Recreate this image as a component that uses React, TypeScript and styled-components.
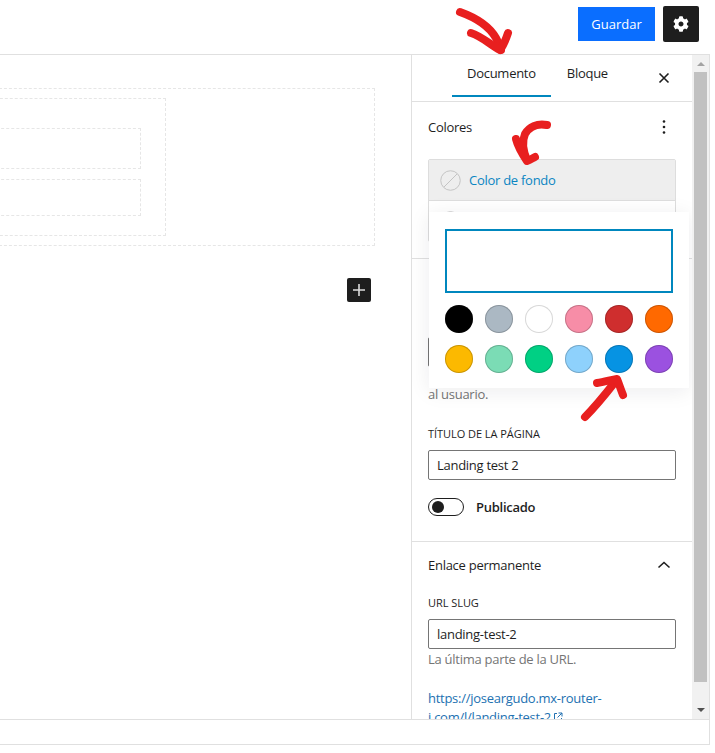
import React from "react";
import styled, { createGlobalStyle } from "styled-components";
import { FaCog } from "react-icons/fa";

const Global = createGlobalStyle`
  html, body { margin: 0; padding: 0; background: #fff; }
  body { font-family: "Open Sans", "Noto Sans", Arial, sans-serif; font-size: 13px; color: #1e1e1e; letter-spacing: -0.27px; }
  * { box-sizing: border-box; }
`;

const Page = styled.div`
  position: relative;
  width: 715px;
  height: 753px;
  overflow: hidden;
  background: #fff;
`;
const Frame = styled.div`
  width: 710px;
  height: 745px;
  display: flex;
  flex-direction: column;
`;
const Header = styled.header`
  height: 55px;
  flex: none;
  border-bottom: 1px solid #e0e0e0;
  display: flex;
  justify-content: flex-end;
  align-items: center;
  gap: 8px;
  padding: 0 11px 6px 0;
`;
const SaveButton = styled.button`
  width: 77px;
  height: 34px;
  border: 0;
  background: #0a6eff;
  color: #fff;
  font: 500 13px "Open Sans", sans-serif;
  padding: 0;
`;
const SettingsButton = styled.button`
  width: 36px;
  height: 36px;
  border: 0;
  border-radius: 2px;
  background: #1e1e1e;
  color: #fff;
  display: flex;
  align-items: center;
  justify-content: center;
  padding: 0;
  font-size: 16px;
`;
const Main = styled.div`
  flex: 1;
  min-height: 0;
  display: flex;
  border-right: 1px solid #e0e0e0;
`;
const Canvas = styled.main`
  width: 411px;
  flex: none;
  overflow: hidden;
  display: flex;
  flex-direction: column;
  padding-top: 33px;
`;
const Dashed = styled.div<{ $w: number; $h: number; $pt?: number; $mb?: number; $ml?: number }>`
  flex: none;
  width: ${(p) => p.$w}px;
  height: ${(p) => p.$h}px;
  margin-left: ${(p) => p.$ml ?? 0}px;
  margin-bottom: ${(p) => p.$mb ?? 0}px;
  padding-top: ${(p) => p.$pt ?? 0}px;
  border: 1px dashed #e6e6e6;
`;
const AddButton = styled.button`
  flex: none;
  width: 24px;
  height: 24px;
  margin: 32px 0 0 347px;
  padding: 0;
  border: 0;
  border-radius: 2px;
  background: #1e1e1e;
  display: flex;
  align-items: center;
  justify-content: center;
`;
const Sidebar = styled.aside`
  width: 281px;
  flex: none;
  border-left: 1px solid #e0e0e0;
  overflow: hidden;
`;
const Tabs = styled.div`
  height: 47px;
  border-bottom: 1px solid #e0e0e0;
  padding-left: 40px;
  display: flex;
  align-items: flex-start;
`;
const Tab = styled.div<{ $active?: boolean }>`
  height: 42px;
  padding: 9px 15px 0;
  line-height: 18px;
  font-size: 13px;
  color: #1e1e1e;
  border-bottom: 2px solid ${(p) => (p.$active ? "#0087be" : "transparent")};
  margin-right: ${(p) => (p.$active ? 1 : 0)}px;
`;
const CloseIcon = styled.svg`
  margin: 17px 22px 0 auto;
  width: 12px;
  height: 12px;
  flex: none;
`;
const Section = styled.section<{ $pb: number; $pt: number; $border?: boolean }>`
  padding: ${(p) => p.$pt}px 16px ${(p) => p.$pb}px;
  border-bottom: ${(p) => (p.$border ? "1px solid #e0e0e0" : "0")};
`;
const SectionHead = styled.div<{ $mb?: number }>`
  display: flex;
  justify-content: space-between;
  align-items: center;
  height: 18px;
  line-height: 18px;
  margin-bottom: ${(p) => p.$mb ?? 0}px;
`;
const HeadIcon = styled.svg`
  width: 16px;
  height: 16px;
  margin-right: 4px;
  flex: none;
`;
const ColorBox = styled.div`
  position: relative;
  border: 1px solid #ddd;
  border-radius: 2px;
`;
const ColorRow = styled.div<{ $active?: boolean }>`
  height: ${(p) => (p.$active ? 41 : 40)}px;
  display: flex;
  align-items: center;
  padding: 0 12px 0 11px;
  gap: 8px;
  background: ${(p) => (p.$active ? "#eeeeee" : "#fff")};
  border-bottom: ${(p) => (p.$active ? "1px solid #ddd" : "0")};
  color: #0a85c2;
`;
const EmptySwatch = styled.svg`
  width: 21px;
  height: 21px;
  flex: none;
`;
const Popover = styled.div`
  position: absolute;
  left: 0;
  top: 52px;
  width: 260px;
  height: 176px;
  z-index: 2;
  background: #fff;
  box-shadow: 0 3px 20px rgba(25, 30, 35, 0.08);
  padding: 17px 16px;
`;
const HexField = styled.div`
  width: 228px;
  height: 64px;
  border: 2px solid #0087be;
  margin-bottom: 12px;
`;
const SwatchGrid = styled.div`
  display: grid;
  grid-template-columns: repeat(6, 28px);
  gap: 12px;
`;
const Swatch = styled.div<{ $c: string; $ring?: string }>`
  width: 28px;
  height: 28px;
  border-radius: 50%;
  background: ${(p) => p.$c};
  box-shadow: inset 0 0 0 1px ${(p) => p.$ring ?? "rgba(0,0,0,0.2)"};
`;
const Input = styled.div`
  height: 30px;
  border: 1px solid #757575;
  border-radius: 2px;
  padding: 0 8px;
  line-height: 28px;
  font-size: 13px;
  color: #1e1e1e;
  background: #fff;
`;
const HiddenField = styled(Input)`
  margin-top: 78px;
`;
const Help = styled.div<{ $mt: number }>`
  margin-top: ${(p) => p.$mt}px;
  line-height: 18px;
  color: #757575;
  font-size: 13px;
`;
const Label = styled.div<{ $mt: number }>`
  margin-top: ${(p) => p.$mt}px;
  margin-bottom: 9px;
  font-size: 11px;
  line-height: 14px;
  font-weight: 500;
  letter-spacing: -0.05px;
  text-transform: uppercase;
  color: #1e1e1e;
`;
const ToggleRow = styled.div`
  margin-top: 18px;
  display: flex;
  align-items: center;
  gap: 12px;
  height: 18px;
  font-weight: 600;
`;
const Toggle = styled.div`
  width: 36px;
  height: 18px;
  border: 1px solid #1e1e1e;
  border-radius: 9px;
  padding: 2px 3px;
  flex: none;
`;
const Knob = styled.div`
  width: 12px;
  height: 12px;
  border-radius: 50%;
  background: #1e1e1e;
`;
const Link = styled.a`
  display: block;
  margin-top: 21px;
  line-height: 19px;
  color: #2271b1;
  word-break: normal;
`;
const ExternalIcon = styled.svg`
  width: 10px;
  height: 10px;
  margin-left: 2px;
`;
const Scrollbar = styled.div`
  flex: 1;
  background: #f1f1f1;
  display: flex;
  flex-direction: column;
  align-items: center;
  padding: 0 2px;
`;
const ArrowBox = styled.div`
  height: 17px;
  flex: none;
  display: flex;
  align-items: center;
  justify-content: center;
`;
const Arrow = styled.div<{ $up?: boolean }>`
  width: 0;
  height: 0;
  border-left: 4px solid transparent;
  border-right: 4px solid transparent;
  ${(p) => (p.$up ? "border-bottom: 4px solid #a3a3a3;" : "border-top: 4px solid #505050;")}
`;
const Thumb = styled.div`
  width: 13px;
  height: 610px;
  background: #c1c1c1;
  flex: none;
  margin-bottom: 19px;
`;
const Footer = styled.footer`
  height: 26px;
  flex: none;
  border-top: 1px solid #e0e0e0;
  border-bottom: 1px solid #e0e0e0;
  border-right: 1px solid #e0e0e0;
`;
const Annotations = styled.svg`
  position: absolute;
  left: 0;
  top: 0;
  z-index: 5;
  pointer-events: none;
`;

const swatches: [string, string?][] = [
  ["#000000"], ["#abb8c3"], ["#ffffff", "#d8d8d8"], ["#f78da7"], ["#cf2e2e"], ["#ff6900"],
  ["#fcb900"], ["#7bdcb5"], ["#00d084"], ["#8ed1fc"], ["#0693e3"], ["#9b51e0"],
];

const Empty = () => (
  <EmptySwatch viewBox="0 0 21 21">
    <circle cx="10.5" cy="10.5" r="9.75" fill="none" stroke="#c4c4c4" strokeWidth="1" />
    <line x1="4" y1="17" x2="17" y2="4" stroke="#c4c4c4" strokeWidth="1" />
  </EmptySwatch>
);

export default function App() {
  return (
    <Page>
      <Global />
      <Frame>
        <Header>
          <SaveButton>Guardar</SaveButton>
          <SettingsButton aria-label="Ajustes"><FaCog /></SettingsButton>
        </Header>
        <Main>
          <Canvas>
            <Dashed $w={386} $h={158} $ml={-11} $pt={9}>
              <Dashed $w={176} $h={138} $pt={29}>
                <Dashed $w={150} $h={41} $mb={10} />
                <Dashed $w={150} $h={37} />
              </Dashed>
            </Dashed>
            <AddButton aria-label="Añadir">
              <svg width="12" height="12" viewBox="0 0 12 12">
                <path d="M6 0v12M0 6h12" stroke="#ddd" strokeWidth="1.6" />
              </svg>
            </AddButton>
          </Canvas>
          <Sidebar>
            <Tabs>
              <Tab $active>Documento</Tab>
              <Tab>Bloque</Tab>
              <CloseIcon viewBox="0 0 12 12">
                <path d="M1.5 1.5l9 9M10.5 1.5l-9 9" stroke="#1e1e1e" strokeWidth="1.6" />
              </CloseIcon>
            </Tabs>
            <Section $pt={16} $pb={16} $border>
              <SectionHead $mb={23}>
                <span>Colores</span>
                <HeadIcon viewBox="0 0 16 16">
                  <circle cx="8" cy="2.5" r="1.3" fill="#1e1e1e" />
                  <circle cx="8" cy="8" r="1.3" fill="#1e1e1e" />
                  <circle cx="8" cy="13.5" r="1.3" fill="#1e1e1e" />
                </HeadIcon>
              </SectionHead>
              <ColorBox>
                <ColorRow $active><Empty />Color de fondo</ColorRow>
                <ColorRow><Empty /></ColorRow>
                <Popover>
                  <HexField />
                  <SwatchGrid>
                    {swatches.map(([c, r]) => <Swatch key={c} $c={c} $ring={r} />)}
                  </SwatchGrid>
                </Popover>
              </ColorBox>
            </Section>
            <Section $pt={0} $pb={25} $border>
              <HiddenField />
              <Help $mt={18}>al usuario.</Help>
              <Label $mt={24}>Título de la página</Label>
              <Input>Landing test 2</Input>
              <ToggleRow>
                <Toggle><Knob /></Toggle>
                Publicado
              </ToggleRow>
            </Section>
            <Section $pt={14} $pb={0}>
              <SectionHead>
                <span>Enlace permanente</span>
                <HeadIcon viewBox="0 0 16 16">
                  <path d="M2.5 10.5L8 5.5l5.5 5" fill="none" stroke="#1e1e1e" strokeWidth="1.6" />
                </HeadIcon>
              </SectionHead>
              <Label $mt={22}>URL Slug</Label>
              <Input>landing-test-2</Input>
              <Help $mt={1}>La última parte de la URL.</Help>
              <Link>
                https://joseargudo.mx-router-
                <br />
                i.com/l/landing-test-2
                <ExternalIcon viewBox="0 0 10 10">
                  <path d="M4 1.5H1.5v7h7V6M5.5 1h3.5v3.5M9 1L4.5 5.5" fill="none" stroke="#2271b1" strokeWidth="1" />
                </ExternalIcon>
              </Link>
            </Section>
          </Sidebar>
          <Scrollbar>
            <ArrowBox><Arrow $up /></ArrowBox>
            <Thumb />
            <ArrowBox><Arrow /></ArrowBox>
          </Scrollbar>
        </Main>
        <Footer />
      </Frame>
      <Annotations width="715" height="753" viewBox="0 0 715 753">
        <g fill="none" stroke="#e81f1f" strokeWidth="8" strokeLinecap="round" strokeLinejoin="round">
          <path d="M460 12C474 17 489 26 496 38C499 43 500 46 501 50" />
          <path d="M471 33C481 36 491 45 500 50C503 46 506 39 508 33" />
          <path d="M547 125C537 123 529 127 525 134C522 141 523 151 527 160" />
          <path d="M516 139C518 147 523 155 527 161C530 160 533 158 535 157" />
          <path d="M585 417C594 408 604 396 615 382" />
          <path d="M597 383C604 382 611 380 617 379C619 384 621 390 623 395" />
        </g>
      </Annotations>
    </Page>
  );
}
